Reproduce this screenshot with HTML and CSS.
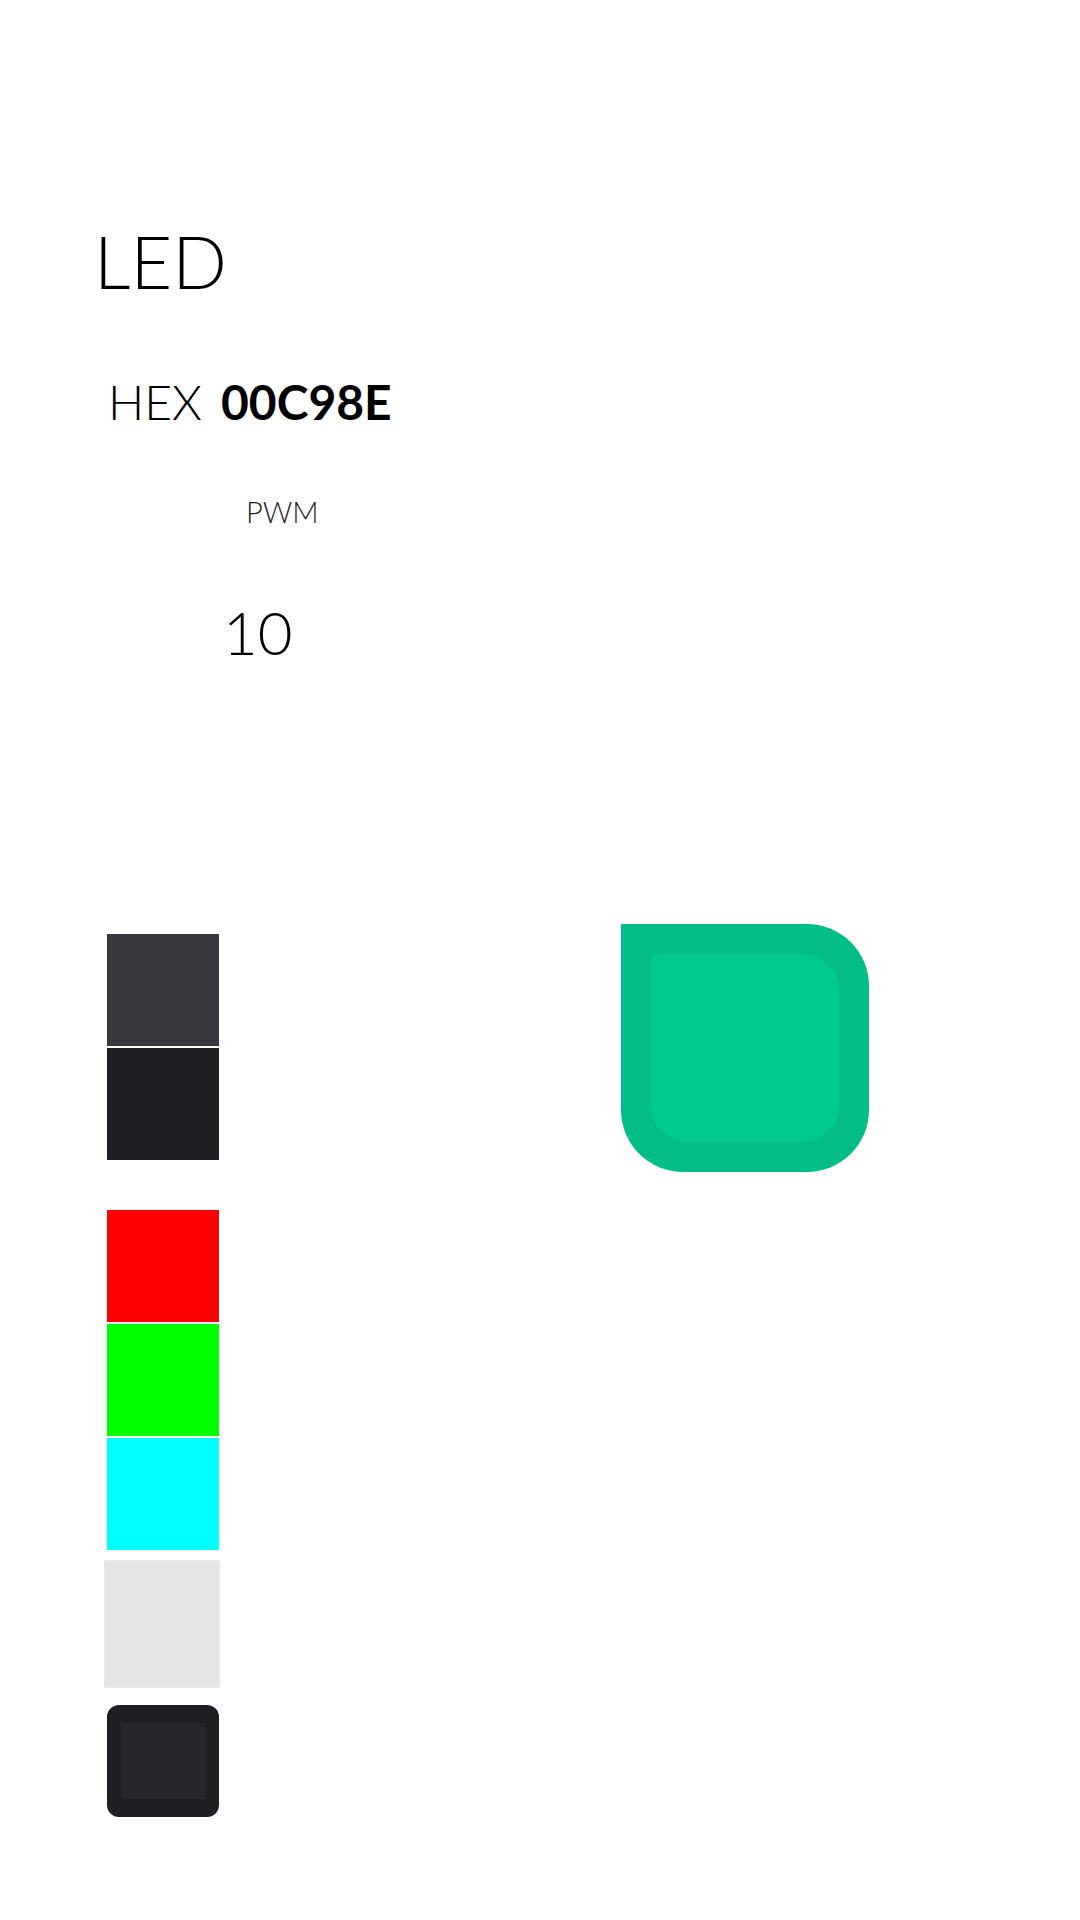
FILE: index.html
```html
<!DOCTYPE html>
<html lang="en">
<head>
<meta charset="utf-8">
<title>LED</title>
<link rel="stylesheet" href="styles.css">
</head>
<body>
<main class="screen">
  <h1 class="title">LED</h1>
  <div class="hex-row">
    <span class="hex-label">HEX</span>
    <span class="hex-value">00C98E</span>
  </div>
  <div class="pwm">
    <div class="pwm-label">PWM</div>
    <div class="pwm-value">10</div>
  </div>
  <section class="controls">
    <div class="swatches">
      <div class="group">
        <div class="swatch dark-1"></div>
        <div class="swatch dark-2"></div>
      </div>
      <div class="group rgb">
        <div class="swatch red"></div>
        <div class="swatch green"></div>
        <div class="swatch cyan"></div>
      </div>
      <div class="swatch light"></div>
      <div class="swatch off"><div class="off-inner"></div></div>
    </div>
    <div class="led"><div class="led-core"></div></div>
  </section>
</main>
</body>
</html>
```
FILE: styles.css
```css
* { box-sizing: border-box; }
html, body { margin: 0; background: #ffffff; }
body {
  font-family: Lato, "Open Sans", "Liberation Sans", sans-serif;
  color: #000;
}
.screen {
  padding-top: 218px;
  min-height: 1920px;
}
.title {
  margin: 0 0 69px 94px;
  font-size: 72px;
  font-weight: 300;
  line-height: 1.2;
}
.hex-row {
  display: flex;
  gap: 19px;
  margin: 0 0 64px 108px;
  font-size: 48px;
  line-height: 1.2;
}
.hex-label { font-weight: 300; }
.hex-value { font-weight: 700; }
.pwm-label {
  margin: 0 0 66px 246px;
  font-size: 29px;
  font-weight: 300;
  line-height: 1.2;
  color: #1e1e1e;
}
.pwm-value {
  margin-left: 223px;
  font-size: 60px;
  font-weight: 300;
  line-height: 1.2;
}
.controls {
  display: flex;
  align-items: flex-start;
  gap: 402px;
  margin-top: 256px;
  padding-left: 107px;
}
.swatches {
  display: flex;
  flex-direction: column;
  padding-top: 10px;
  width: 112px;
}
.group {
  display: flex;
  flex-direction: column;
  gap: 2px;
  margin-bottom: 50px;
}
.group.rgb { margin-bottom: 10px; }
.swatch { width: 112px; height: 112px; }
.dark-1 { background: #39383e; }
.dark-2 { background: #1f1e23; }
.red { background: #ff0000; }
.green { background: #00ff00; }
.cyan { background: #00ffff; }
.swatch.light {
  width: 116px;
  height: 128px;
  margin-left: -3px;
  margin-bottom: 17px;
  background: #e6e6e6;
  border: 1px solid #ececec;
}
.swatch.off {
  background: #1f1e23;
  border-radius: 12px;
  padding: 18px 13px 18px 14px;
}
.off-inner {
  width: 100%;
  height: 100%;
  background: #27272b;
}
.led {
  width: 248px;
  height: 248px;
  padding: 30px;
  background: #03bd88;
  border-radius: 0 62px 62px 62px;
}
.led-core {
  width: 100%;
  height: 100%;
  background: #00c98e;
  border-radius: 0 36px 36px 36px;
}
```
